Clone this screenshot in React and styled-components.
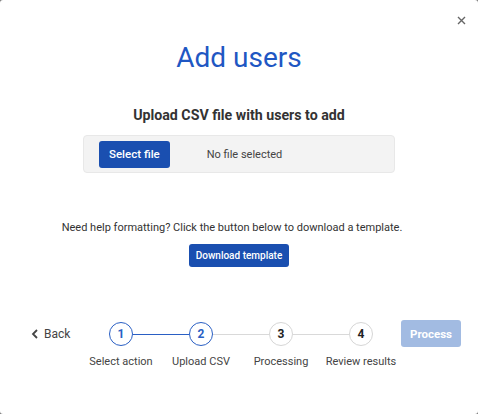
import React from 'react';
import styled, { createGlobalStyle, css } from 'styled-components';

const GlobalStyle = createGlobalStyle`
  html, body {
    margin: 0;
    padding: 0;
    background: #7a7a7a;
  }
  body {
    font-family: Roboto, "Noto Sans", "Liberation Sans", sans-serif;
  }
  * { box-sizing: border-box; }
`

const Modal = styled.div`
  position: relative;
  width: 478px;
  height: 414px;
  background: #ffffff;
  border-radius: 3px;
  display: flex;
  flex-direction: column;
  align-items: center;
  padding-top: 40px;
`
const Close = styled.button`
  position: absolute;
  top: 14px;
  right: 11px;
  width: 12px;
  height: 12px;
  padding: 0;
  border: none;
  background: transparent;
  display: flex;
  align-items: center;
  justify-content: center;
`
const Title = styled.h1`
  margin: 0;
  font-size: 28px;
  line-height: 36px;
  font-weight: 400;
  color: #1f57c3;
`
const Subtitle = styled.h2`
  margin: 29px 0 0 0;
  font-size: 14.2px;
  line-height: 20px;
  font-weight: 700;
  color: #333333;
`
const FileBox = styled.div`
  margin-top: 10px;
  width: 312px;
  height: 38px;
  background: #f3f3f3;
  border: 1px solid #e8e8e8;
  border-radius: 4px;
  display: flex;
  align-items: center;
  padding-left: 15px;
  gap: 37px;
`
const Button = styled.button`
  border: none;
  border-radius: 3px;
  background: #1a4fb0;
  color: #ffffff;
  font-family: inherit;
  font-weight: 500;
  font-size: ${p => p.$fs || 11.5}px;
  height: ${p => p.$h || 27}px;
  padding: 0 ${p => p.$px || 10}px;
  cursor: pointer;
  ${p => p.$disabled && css`
    background: #a2bbe2;
    font-weight: 700;
    cursor: default;
  `}
`
const FileName = styled.span`
  font-size: 11px;
  color: #444444;
`
const Help = styled.p`
  margin: 47px 0 0 0;
  padding-right: 14px;
  font-size: 11px;
  line-height: 16px;
  color: #333333;
`
const TemplateWrap = styled.div`
  margin-top: 8px;
`
const Footer = styled.div`
  margin-top: 55px;
  width: 100%;
  display: flex;
  align-items: flex-start;
  padding: 0 17px 0 31px;
`
const Back = styled.button`
  flex-shrink: 0;
  display: flex;
  align-items: center;
  gap: 5px;
  height: 24px;
  padding: 0;
  border: none;
  background: transparent;
  font-family: inherit;
  font-size: 12px;
  color: #444444;
  width: 50px;
`
const Steps = styled.div`
  flex-shrink: 0;
  display: flex;
`
const Step = styled.div`
  position: relative;
  width: 80px;
  display: flex;
  flex-direction: column;
  align-items: center;
  &::before, &::after {
    content: '';
    position: absolute;
    top: 11.5px;
    height: 1.5px;
    width: 28px;
  }
  &::before {
    left: 0;
    background: ${p => p.$first ? 'transparent' : (p.$active ? '#2a5fc4' : '#d9d9d9')};
  }
  &::after {
    right: 0;
    background: ${p => p.$last ? 'transparent' : (p.$nextActive ? '#2a5fc4' : '#d9d9d9')};
  }
`
const Circle = styled.div`
  width: 24px;
  height: 24px;
  border-radius: 50%;
  border: 1.5px solid ${p => p.$active ? '#2a5fc4' : '#d6d6d6'};
  color: ${p => p.$active ? '#2a5fc4' : '#222222'};
  font-size: 12px;
  font-weight: 700;
  display: flex;
  align-items: center;
  justify-content: center;
  background: #fff;
`
const StepLabel = styled.span`
  margin-top: 8px;
  font-size: 11px;
  line-height: 16px;
  color: #444444;
  white-space: nowrap;
`
const ProcessWrap = styled.div`
  margin-left: auto;
  margin-top: -2px;
`

const steps = ['Select action', 'Upload CSV', 'Processing', 'Review results']
const current = 2

const App = () => {
  return (
    <>
      <GlobalStyle />
      <Modal>
        <Close aria-label="Close">
          <svg width="9" height="9" viewBox="0 0 9 9">
            <path d="M1 1L8 8M8 1L1 8" stroke="#666" strokeWidth="1.4" />
          </svg>
        </Close>
        <Title>Add users</Title>
        <Subtitle>Upload CSV file with users to add</Subtitle>
        <FileBox>
          <Button $px={10}>Select file</Button>
          <FileName>No file selected</FileName>
        </FileBox>
        <Help>Need help formatting? Click the button below to download a template.</Help>
        <TemplateWrap>
          <Button $fs={10} $h={23} $px={7}>Download template</Button>
        </TemplateWrap>
        <Footer>
          <Back>
            <svg width="8" height="10" viewBox="0 0 8 10">
              <path d="M6 1L2 5L6 9" stroke="#444" strokeWidth="1.8" fill="none" />
            </svg>
            Back
          </Back>
          <Steps>
            {steps.map((s, i) => (
              <Step
                key={s}
                $first={i === 0}
                $last={i === steps.length - 1}
                $active={i + 1 <= current}
                $nextActive={i + 2 <= current}
              >
                <Circle $active={i + 1 <= current}>{i + 1}</Circle>
                <StepLabel>{s}</StepLabel>
              </Step>
            ))}
          </Steps>
          <ProcessWrap>
            <Button $disabled $px={9}>Process</Button>
          </ProcessWrap>
        </Footer>
      </Modal>
    </>
  )
}

export default App;
